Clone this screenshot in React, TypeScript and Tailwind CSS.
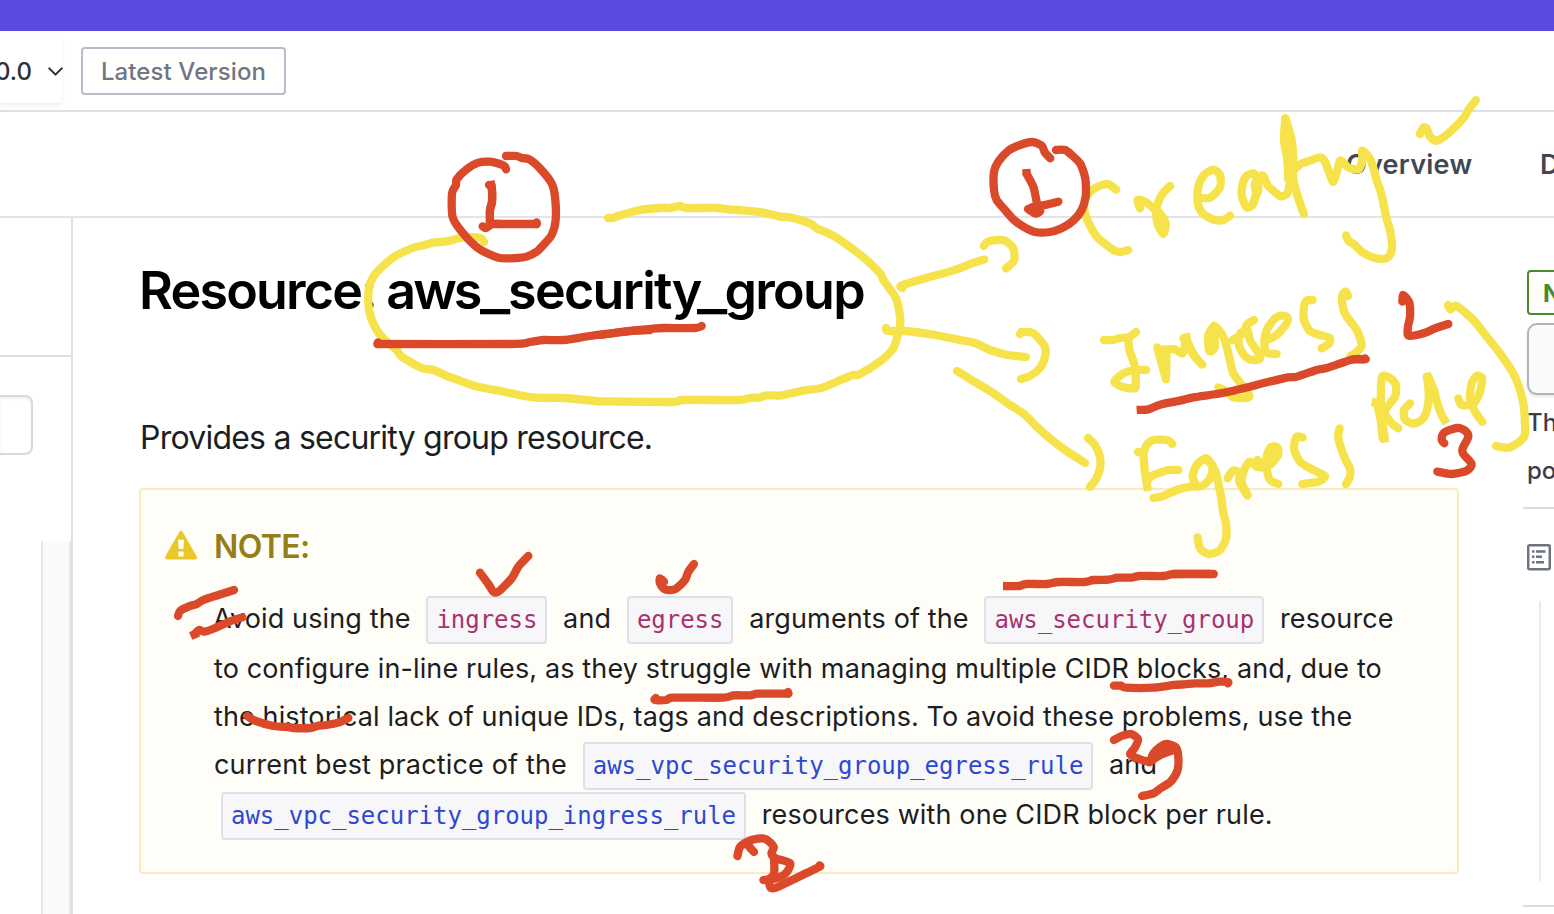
import type { ReactNode } from 'react';
import { ChevronDown } from 'lucide-react';

const YELLOW = '#f6e34c';
const RED = '#da492a';

type Stroke = { color: string; points: string; square?: boolean };
type Layer = { transform: string; strokes: Stroke[] };

const y = (points: string, square = false): Stroke => ({ color: YELLOW, points, square });
const r = (points: string, square = false): Stroke => ({ color: RED, points, square });

const third = 'scale(0.33333)';

// Softens the joints of a hand-drawn line while still passing through every point.
function smooth(points: string): string {
  const p = points.split(' ').map((pair) => pair.split(',').map(Number));
  const k = 0.13;
  let d = `M${p[0][0]} ${p[0][1]}`;
  for (let i = 0; i < p.length - 1; i++) {
    const a = p[Math.max(i - 1, 0)];
    const b = p[i];
    const c = p[i + 1];
    const e = p[Math.min(i + 2, p.length - 1)];
    const x1 = b[0] + (c[0] - a[0]) * k;
    const y1 = b[1] + (c[1] - a[1]) * k;
    const x2 = c[0] - (e[0] - b[0]) * k;
    const y2 = c[1] - (e[1] - b[1]) * k;
    d += `C${x1.toFixed(1)} ${y1.toFixed(1)} ${x2.toFixed(1)} ${y2.toFixed(1)} ${c[0]} ${c[1]}`;
  }
  return d;
}

// Freehand marks, grouped by the area of the page they annotate.
const layers: Layer[] = [
  {
    transform: '',
    strokes: [
      y('450,377 475,386 500,391 530,397 545,398 565,398 600,401.5'),
      y('886,328 888,331 905,331 935,335 960,340 975,343 990,350 1008,355 1026,357'),
      y('1020,334 1022,332 1033,333 1040,340 1045,347 1045,357 1040,368 1030,376 1021,379'),
      y('957,371 970,379 993,393 1010,405 1024,414 1035,425 1047,436 1065,450 1085,463'),
    ],
  },
  {
    transform: `translate(350 130) ${third}`,
    strokes: [
      y('402,336 390,324 340,322 290,334 250,338 225,345 200,350 160,366 130,382 95,412 70,440 57,475 55,520 62,560 80,600 105,630 140,660 155,680 215,714 250,720 300,742'),
    ],
  },
  {
    transform: `translate(600 180) ${third}`,
    strokes: [
      y('0,664 215,666 250,660 415,660 450,654 480,652 500,646 545,646 610,632 670,622 755,586 775,584 835,548 878,508 892,470 900,440 900,410 888,355 850,300 840,280 790,232 705,170 650,145 630,130 570,112 540,110 490,98 415,90 385,88 350,84 260,84 240,78 210,84 180,84 120,90 60,106 40,114 24,114'),
    ],
  },
  {
    transform: `translate(880 90) ${third}`,
    strokes: [
      y('709,299 682,282 645,294 622,315 612,345 618,380 640,425 655,445 680,465 700,480 722,486 745,480'),
      y('68,594 62,588 90,578 130,566 160,558 230,538 275,520 313,508'),
      y('311,468 322,456 350,450 375,452 400,475 402,512 378,535'),
    ],
  },
  {
    transform: `translate(1100 80) ${third}`,
    strokes: [
      y('120,385 112,360 135,365 155,380 180,400 197,430 190,462 172,430 169,390 175,365 190,338 210,318'),
      y('295,353 330,353 360,322 360,285 340,269 312,285 295,320 293,370 310,402 345,420 370,420 390,407'),
      y('462,280 440,287 428,312 426,350 440,382 458,375 468,340 464,316 475,290 490,288 502,315 520,332 543,349 562,340 570,310 575,280 600,253 630,242 660,232 675,245 690,285 700,305 712,270 722,241 745,262 775,268 787,240 787,212 812,240 830,300 845,345 858,410 870,450 876,505 862,534 825,534 785,515 765,495 745,482 738,466'),
      y('472,300 475,330 458,370'),
      y('556,115 552,180 562,240 565,300'),
      y('556,115 575,180 580,240 580,300 600,370 612,402'),
      y('557,130 563,180 570,240'),
      y('960,162 970,143 980,145 990,170 1010,182 1045,160 1090,115 1105,90 1128,60'),
      y('960,160 970,150 978,150'),
    ],
  },
  {
    transform: `translate(1080 270) ${third}`,
    strokes: [
      y('72,210 100,210 120,204 145,202 168,186'),
      y('145,202 148,240 165,290 167,350 155,355 125,350 103,335 130,310 165,300 198,300'),
      y('232,232 245,280 258,328'),
      y('234,243 258,243 258,325'),
      y('245,260 258,240 285,238 308,250 318,205'),
      y('318,190 325,230 345,260 367,284', true),
      y('310,205 322,215 345,260 367,284'),
      y('402,168 385,195 388,243 405,230 402,168 430,200 445,250 460,310 490,350 508,376 500,384 460,382 440,365 415,352'),
      y('522,150 500,165 492,188 458,210'),
      y('482,188 475,215 485,245 505,266 525,270 540,266 530,240 512,215 503,180'),
      y('555,212 590,195 620,160 622,142 605,137 585,145 560,180 553,220 560,248 590,252'),
      y('698,90 680,92 672,110 672,150 690,183 720,195 748,203 748,220 725,235'),
      y('804,78 797,65 787,75 788,110 800,140 820,165 835,190 845,225 835,242 812,258'),
      y('1104,105 1112,118 1130,108 1180,150 1220,200 1260,250 1305,320 1330,400 1335,490 1322,512 1290,532 1265,532 1248,528'),
      y('875,397 890,400 900,440 910,490 915,518', true),
      y('908,505 903,440 905,325 930,324 948,345 945,380 922,410 915,430 935,460 955,475'),
      y('896,400 903,440 914,500'),
      y('990,400 972,420 975,448 1000,461 1030,445 1045,400 1045,350 1040,320'),
      y('1040,310 1062,360 1072,400 1085,435 1100,460', true),
      y('1135,385 1145,405 1180,400 1200,365 1206,325 1190,318 1175,340 1170,385 1185,425 1207,456'),
    ],
  },
  {
    transform: `translate(1080 410) ${third}`,
    strokes: [
      y('24,84 45,105 60,140 60,175 48,208 30,230'),
      y('277,102 262,90 220,90 200,105 190,128 174,126'),
      y('190,128 195,190 204,243', true),
      y('205,208 215,198 240,188 265,180 295,180'),
      y('220,264 245,260 290,240 330,230 365,228 390,205 398,170 378,145 350,165 338,200 350,228'),
      y('378,145 405,180 415,220 425,270 430,310 438,340 438,385 420,420 387,432 360,415 353,382'),
      y('443,205 458,182 478,188 478,215 495,245 503,256 485,215 495,175 510,155 530,170 545,172'),
      y('533,150 545,172 575,160 594,135 592,112 572,112 560,140 560,175 570,210 595,222'),
      y('585,120 575,140 565,155'),
      y('668,83 650,80 642,115 660,155 700,180 735,198 715,215 667,222'),
      y('779,55 774,80 785,120 797,150 810,175 810,200 798,222'),
    ],
  },
  {
    transform: `translate(350 130) ${third}`,
    strokes: [
      r('468,78 500,78 515,84 538,88 570,115 605,160 615,200 617,270 605,315 580,345 560,365 530,380 500,384 445,383 385,355 335,305 308,262 306,190 318,165 320,148 350,118 385,98 420,95 450,102 465,110 468,118'),
      r('84,637 84,641'),
      r('82,642 480,642 540,636 580,630 640,630 720,618 800,608 860,602 900,600'),
      r('421,153 425,170 426,215 420,240 420,285', true),
      r('417,165 425,170 426,215 420,240 420,280'),
      r('398,289 408,294 425,282 445,282'),
      r('425,282 560,282'),
      r('560,282 560,277'),
    ],
  },
  {
    transform: `translate(600 180) ${third}`,
    strokes: [r('0,465 65,456 120,450 160,446 190,444 285,444 305,438')],
  },
  {
    transform: `translate(880 90) ${third}`,
    strokes: [
      r('528,180 555,180 575,195 600,220 612,250 617,275 617,320 605,360 580,392 545,415 510,426 465,426 430,410 400,388 375,360 350,330 342,300 342,245 355,215 385,182 420,165 457,156 485,167 495,188 511,205'),
      r('439,237 440,255', true),
      r('440,252 460,290 470,335 478,362'),
      r('444,357 468,371 480,362 455,352 495,345 535,335'),
    ],
  },
  {
    transform: `translate(1080 270) ${third}`,
    strokes: [
      r('170,420 205,418 240,404 300,392 340,382 410,372 460,362 610,325 650,320 710,300 740,294 820,268 850,268', true),
      r('820,268 855,268 855,265'),
      r('967,95 970,75 988,98 990,140 984,170 986,197 1030,190 1065,175 1105,162'),
      r('1093,520 1085,510 1092,488 1130,474 1155,482 1165,500 1148,535 1150,552 1175,582 1160,602 1115,612 1072,605'),
    ],
  },
  {
    transform: `translate(130 480) ${third}`,
    strokes: [
      r('144,408 150,393 175,380 200,372 220,360 265,345 312,330'),
      r('182,468 205,458', true),
      r('195,462 207,450 225,455 260,442 300,424 337,412'),
      r('1050,278 1075,312 1090,335 1105,335 1145,295 1165,260 1195,228'),
      r('352,708 375,722 430,738 475,741 490,744 540,744 565,737 590,735 625,728 655,714'),
    ],
  },
  {
    transform: `translate(540 540) ${third}`,
    strokes: [
      r('372,125 360,115 360,130 375,148 405,148 435,120 445,95 462,72'),
      r('347,474 345,480 380,480 400,473 550,473 580,466 630,466 655,461 745,461'),
      r('745,461 744,456'),
    ],
  },
  {
    transform: 'translate(940 540) scale(0.34435 0.33333)',
    strokes: [
      r('183,138 230,138 250,132 310,132 345,126 420,126 445,120 490,119 515,113 555,113 580,108 650,108 680,102 785,102', true),
      r('680,102 795,102'),
      r('505,437 525,437 540,443 620,443 680,435 710,433 740,430 780,430 810,425 836,426 836,430'),
      r('505,600 530,587 555,582 575,598 565,625 552,642 570,654 608,664 620,640 640,620 660,612 685,622 692,650 690,690 670,725 640,745 620,760 587,768'),
      r('608,667 640,645 680,630'),
      r('615,650 640,630 665,618'),
    ],
  },
  {
    transform: 'translate(200 730) scale(0.44643 0.33333)',
    strokes: [
      r('1204,378 1210,350 1235,330 1265,326 1285,350 1280,370 1290,385 1322,400 1312,430 1290,445 1262,450'),
      r('1241,366 1230,350'),
      r('1286,385 1286,430 1275,450 1278,473 1290,473 1330,448 1360,428 1388,410 1388,406'),
    ],
  },
];

function Annotations() {
  return (
    <svg className="pointer-events-none absolute inset-0" width="1554" height="914" viewBox="0 0 1554 914" fill="none">
      {layers.map((layer, i) => (
        <g key={i} transform={layer.transform || undefined}>
          {layer.strokes.map((s, j) => (
            <path
              key={j}
              d={smooth(s.points)}
              stroke={s.color}
              strokeWidth={8.3}
              strokeLinejoin="round"
              strokeLinecap={s.square ? 'butt' : 'round'}
              vectorEffect="non-scaling-stroke"
            />
          ))}
        </g>
      ))}
    </svg>
  );
}

function Code({ children, link = false }: { children: ReactNode; link?: boolean }) {
  return (
    <code
      className={`mx-2 flex h-12 shrink-0 items-center rounded-[4px] border-2 border-[#dedfe7] bg-[#f7f7fa] px-2 font-['DejaVu_Sans_Mono',monospace] text-[24px] leading-none tracking-[-0.02px] ${
        link ? 'text-[#2e48d0]' : 'text-[#a8326e]'
      }`}
    >
      {children}
    </code>
  );
}

function Line({ children, tall = false }: { children: ReactNode; tall?: boolean }) {
  return (
    <div className={`flex items-center whitespace-pre ${tall ? 'h-[50px] [&>span]:pb-[4px]' : 'h-12 pb-[2px] pl-px'}`}>
      {children}
    </div>
  );
}

function Sidebar() {
  return (
    <aside className="flex w-[73px] shrink-0 flex-col border-r-2 border-[#dedfe6]">
      <div className="h-[139px] shrink-0 border-b-2 border-[#dedfe6]" />
      <div className="mt-[38px] h-[60px] w-[33px] shrink-0 rounded-r-[8px] border-2 border-l-0 border-[#d8d8e1] bg-white shadow-[inset_0_2px_3px_rgba(0,0,0,0.06)]" />
      <div className="mt-[86px] ml-[41px] grow border-r-2 border-l-2 border-[#e8e8e8] bg-[#fafafa]" />
    </aside>
  );
}

function Note() {
  return (
    <section className="h-[386px] w-[1320px] rounded-[4px] border-2 border-[#f9ecba] bg-[#fffdf8] pt-[32px] pl-[24px]">
      <div className="flex h-12 items-center">
        <svg width="32" height="30" viewBox="0 0 32 30" className="mr-[17px] shrink-0">
          <path d="M16 1.9 30 26.6H2Z" fill="#eac829" stroke="#eac829" strokeWidth="4" strokeLinejoin="round" />
          <path d="M13 8.8h6l-.6 9.2h-4.8ZM13.4 20.5h5.2v5h-5.2Z" fill="#fffdf8" />
        </svg>
        <h2 className="pt-[2px] text-[32px] font-semibold tracking-[-0.6px] text-[#957e18]">NOTE:</h2>
      </div>
      <div className="mt-[25px] pl-[48px] text-[27px] tracking-[0.13px] text-[#1c1e22]">
        <Line tall>
          <span>Avoid using the </span>
          <Code>ingress</Code>
          <span> and </span>
          <Code>egress</Code>
          <span> arguments of the </span>
          <Code>aws_security_group</Code>
          <span> resource</span>
        </Line>
        <Line>to configure in-line rules, as they struggle with managing multiple CIDR blocks, and, due to</Line>
        <Line>
          <span className="tracking-[0.11px]">
            the historical lack of unique IDs, tags and descriptions. To avoid these problems, use the
          </span>
        </Line>
        <Line tall>
          <span className="ml-px tracking-[0.16px]">current best practice of the </span>
          <Code link>aws_vpc_security_group_egress_rule</Code>
          <span> and</span>
        </Line>
        <Line tall>
          <Code link>aws_vpc_security_group_ingress_rule</Code>
          <span> resources with one CIDR block per rule.</span>
        </Line>
      </div>
    </section>
  );
}

function RightRail() {
  return (
    <aside className="ml-[64px] w-[31px] shrink-0 overflow-hidden pt-[52px] whitespace-nowrap">
      <div className="ml-1 flex h-[45px] w-[60px] items-center rounded-[4px] border-2 border-[#4c8a26] pt-[2px] pl-[14px] text-[24px] font-bold text-[#4c8a26]">
        N
      </div>
      <div className="mt-2 ml-1 h-[72px] w-[60px] rounded-[10px] border-2 border-[#b2b3ba] bg-[#fafafa] shadow-[0_2px_3px_rgba(0,0,0,0.1)]" />
      <p className="mt-[4px] ml-1 text-[24px] leading-[48px] font-medium text-[#3b3e48]">
        Th
        <br />
        po
      </p>
      <div className="mt-[12px] h-0.5 bg-[#dadbe3]" />
      <svg className="mt-[34px] ml-1" width="24" height="28" viewBox="0 0 24 28" fill="none">
        <rect x="1.2" y="2.2" width="21.6" height="24" rx="1.5" stroke="#6d7480" strokeWidth="2.5" />
        <path d="M5 8.5h2.5M9 8.5h9.5M5 13.7h2.5M9 13.7h6M5 19.2h2.5M9 19.2h8" stroke="#6d7480" strokeWidth="2.5" />
      </svg>
      <div className="mt-[30px] ml-4 h-[280px] w-0.5 bg-[#e9eaef]" />
      <div className="mt-[24px] h-0.5 bg-[#dadbe3]" />
    </aside>
  );
}

export default function App() {
  return (
    <div className="relative flex h-[914px] w-[1554px] flex-col overflow-hidden bg-white font-['Inter',sans-serif] leading-none text-[#1c1e22]">
      <div className="h-[31px] shrink-0 bg-[#5b4be1]" />
      <header className="flex h-[81px] shrink-0 items-center border-b-2 border-[#dedfe6]">
        <div className="flex h-16 w-[62px] items-center justify-end rounded-r-[4px] text-[24px] font-medium whitespace-nowrap text-[#2d303a] shadow-[0_2px_4px_rgba(0,0,0,0.08)]">
          <span className="pt-[2px]">0.0</span>
          <ChevronDown className="mt-[2px] mr-[-6px] ml-[11px] size-[25px] shrink-0" strokeWidth={2} />
        </div>
        <div className="ml-[19px] flex h-12 w-[205px] items-center justify-center rounded-[4px] border-2 border-[#b9bccb] pt-[2px] text-[24px] font-medium tracking-[0.1px] whitespace-nowrap text-[#6f7682]">
          Latest Version
        </div>
      </header>
      <nav className="flex h-[106px] shrink-0 items-center border-b-2 border-[#e4e4e6] pl-[1346px] text-[27px] font-semibold tracking-[0.25px] whitespace-nowrap text-[#434754]">
        <span className="w-[194px] shrink-0">Overview</span>
        <span className="w-[14px] shrink-0">D</span>
      </nav>
      <div className="flex min-h-0 grow">
        <Sidebar />
        <main className="w-[1386px] shrink-0 pl-[66px]">
          <h1 className="flex h-[146px] items-center text-[52px] font-semibold tracking-[-1.7px] whitespace-pre text-black">
            <span className="mr-[-3px] tracking-[-1.8px]">Resource: </span>
            <span className="ml-[2px] tracking-[-3px]">aws</span>
            <span className="mr-[5px] ml-px origin-left scale-x-[1.24]">_</span>
            <span>security</span>
            <span className="mr-[5px] ml-[-4px] origin-left scale-x-[1.24]">_</span>
            <span>group</span>
          </h1>
          <p className="flex h-[124px] items-center pt-[23px] pl-px text-[32px] tracking-[-0.77px] whitespace-nowrap">
            Provides a security group resource.
          </p>
          <Note />
        </main>
        <RightRail />
      </div>
      <Annotations />
    </div>
  );
}
